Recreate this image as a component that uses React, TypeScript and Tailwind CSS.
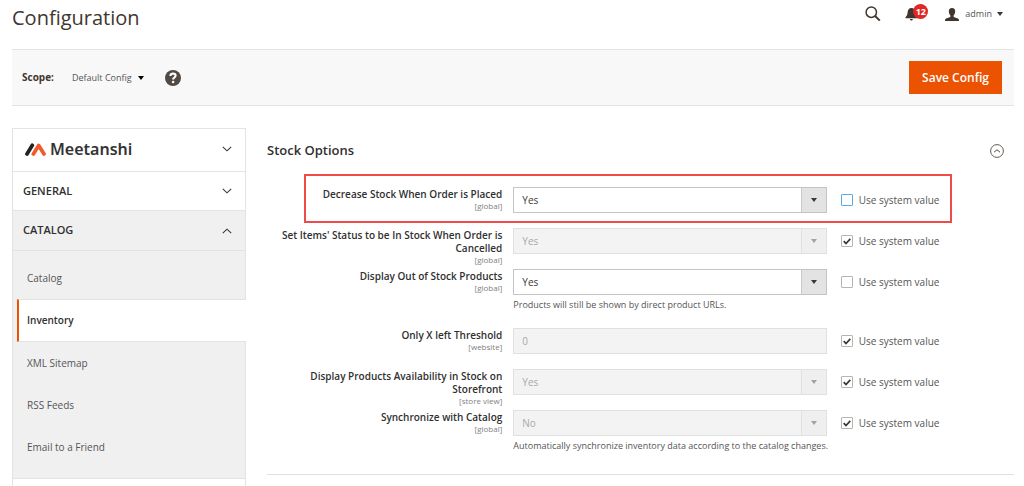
import { ReactNode } from "react";

const NAV = ["Catalog", "Inventory", "XML Sitemap", "RSS Feeds", "Email to a Friend"];

type Field = {
  id: string;
  label: string;
  scope: string;
  value: string;
  kind: "select" | "text";
  system: boolean;
  note?: string;
  highlighted?: boolean;
};

const FIELDS: Field[] = [
  { id: "decrease", label: "Decrease Stock When Order is Placed", scope: "[global]", value: "Yes", kind: "select", system: false, highlighted: true },
  { id: "cancelled", label: "Set Items' Status to be In Stock When Order is Cancelled", scope: "[global]", value: "Yes", kind: "select", system: true },
  { id: "outofstock", label: "Display Out of Stock Products", scope: "[global]", value: "Yes", kind: "select", system: false, note: "Products will still be shown by direct product URLs." },
  { id: "threshold", label: "Only X left Threshold", scope: "[website]", value: "0", kind: "text", system: true },
  { id: "availability", label: "Display Products Availability in Stock on Storefront", scope: "[store view]", value: "Yes", kind: "select", system: true },
  { id: "sync", label: "Synchronize with Catalog", scope: "[global]", value: "No", kind: "select", system: true, note: "Automatically synchronize inventory data according to the catalog changes." },
];

function Caret({ className = "" }: { className?: string }) {
  return (
    <svg viewBox="0 0 6 4" className={`h-1 w-1.5 ${className}`} aria-hidden="true">
      <path d="M0 0h6L3 4z" fill="currentColor" />
    </svg>
  );
}

function Chevron({ up = false }: { up?: boolean }) {
  return (
    <svg viewBox="0 0 10 6" className="h-1.5 w-2.5 text-[#41362f]" fill="none" stroke="currentColor" strokeWidth="1.1" aria-hidden="true">
      <path d={up ? "M.8 5.2 5 1.2l4.2 4" : "M.8.8 5 4.8l4.2-4"} />
    </svg>
  );
}

function Section({ children, open = false, tall = false }: { children: ReactNode; open?: boolean; tall?: boolean }) {
  return (
    <button
      type="button"
      aria-expanded={open}
      className={`flex w-full items-center justify-between border-b border-[#e3e3e3] pr-[13px] pl-[10px] text-left text-[11px] font-semibold text-[#303030] ${tall ? "h-[43px] pb-0.5" : open ? "h-10" : "h-[39px]"} ${open ? "bg-[#f0f0f0]" : "bg-white"}`}
    >
      {children}
      <Chevron up={open} />
    </button>
  );
}

function Row({ field }: { field: Field }) {
  const off = field.system;
  return (
    <div className={`relative grid grid-cols-[235fr_313fr_176fr] gap-x-[11px] ${field.note ? "min-h-[59px]" : "min-h-[41px]"}`}>
      <label htmlFor={field.id} className="block pt-px text-right text-[10px] leading-[13px] font-semibold text-[#303030]">
        {field.label}
        <span className="block text-[8px] leading-[10px] font-normal text-[#808080]">{field.scope}</span>
      </label>
      <div className="min-w-0">
        {field.kind === "select" ? (
          <div className="relative">
            <select
              id={field.id}
              disabled={off}
              defaultValue={field.value}
              className={`block h-[26px] w-full appearance-none border pr-8 pl-2 text-[10px] opacity-100 ${off ? "border-[#e0e0e0] bg-[#f3f3f3] text-[#a9a9a9]" : "border-[#c4c4c4] bg-white text-[#41362f]"}`}
            >
              <option>Yes</option>
              <option>No</option>
            </select>
            <span
              className={`pointer-events-none absolute inset-y-px right-px flex w-[25px] items-center justify-center border-l ${off ? "border-[#e0e0e0] bg-[#efefef] text-[#a6a19d]" : "border-[#c9c9c9] bg-[#e3e3e3] text-[#41362f]"}`}
            >
              <Caret />
            </span>
          </div>
        ) : (
          <input
            id={field.id}
            type="text"
            disabled={off}
            defaultValue={field.value}
            className="block h-[26px] w-full border border-[#e0e0e0] bg-[#f3f3f3] px-2 text-[10px] text-[#a9a9a9]"
          />
        )}
        {field.note && <p className="mt-[3px] text-[9px] leading-[14px] whitespace-nowrap text-[#555]">{field.note}</p>}
      </div>
      <label className="flex h-[26px] items-center gap-[6px] pl-[3px] text-[10px] text-[#555]">
        <span className="grid size-3 place-items-center">
          <input
            type="checkbox"
            defaultChecked={off}
            className={`peer col-start-1 row-start-1 size-3 appearance-none rounded-[1px] border bg-white ${field.highlighted ? "border-[#5aa9e6]" : "border-[#b5b5b5]"}`}
          />
          <svg viewBox="0 0 8 7" className="invisible z-10 col-start-1 row-start-1 h-[7px] w-2 peer-checked:visible" fill="none" stroke="#41362f" strokeWidth="1.7" aria-hidden="true">
            <path d="M.7 3.2 3 5.6 7.3.9" />
          </svg>
        </span>
        Use system value
      </label>
      {field.highlighted && (
        <div className="pointer-events-none absolute -top-[13px] right-[62px] bottom-[5px] left-[37px] border-2 border-[#f04b4b]" />
      )}
    </div>
  );
}

export default function App() {
  return (
    <div className="bg-white pr-[10px] pl-3 font-['Open_Sans',sans-serif] text-[#41362f]">
      <header className="flex h-[49px] justify-between">
        <h1 className="pt-[3px] text-[20px] leading-[30px]">Configuration</h1>
        <div className="flex h-7 items-center pr-[11px]">
          <button type="button" aria-label="Search">
            <svg viewBox="0 0 16 16" className="size-4" fill="none" stroke="#41362f" aria-hidden="true">
              <circle cx="6.3" cy="6.2" r="5.2" strokeWidth="1.5" />
              <path d="m10.100 10 4.700 4.600" strokeWidth="2" />
            </svg>
          </button>
          <button type="button" aria-label="Notifications" className="relative ml-6">
            <svg viewBox="0 0 14 14" className="size-3.5" fill="#41362f" aria-hidden="true">
              <path d="M6.500 1C3.900 1 2.800 3 2.600 5.500 2.400 8 1.800 9 .5 10.300v.9h11.700v-.9C10.900 9 10.400 8 10.200 5.500 10 3 8.900 1 6.500 1zM4.900 12h3c-.2 1-.8 1.500-1.500 1.500S5.100 13 4.900 12z" />
            </svg>
            <span className="absolute -top-[3px] left-2 flex size-[15px] items-center justify-center rounded-full bg-[#e22626] text-[9px] font-bold text-white">12</span>
          </button>
          <button type="button" className="ml-[26px] flex items-center text-[10px] text-[#41362f]">
            <svg viewBox="0 0 14 13" className="h-[13px] w-3.5" fill="#41362f" aria-hidden="true">
              <path d="M7 0c2.200 0 3.300 1.500 3.200 3.500-.1 1.700-.8 3.200-1.600 4v1.200c.6.700 2.500 1 3.900 1.600 1.200.5 1.500 1.200 1.500 2.700H0c0-1.500.3-2.200 1.500-2.700 1.400-.6 3.300-.9 3.900-1.600V7.500c-.8-.8-1.500-2.300-1.600-4C3.700 1.500 4.800 0 7 0z" />
            </svg>
            <span className="ml-[6px] text-[9px] text-[#555]">admin</span>
            <Caret className="ml-[5px]" />
          </button>
        </div>
      </header>

      <div className="flex h-[57px] items-center border-y border-[#e3e3e3] bg-[#f8f8f8] pr-3 pl-[10px]">
        <span className="text-[10px] font-bold">Scope:</span>
        <button type="button" className="ml-[18px] flex items-center text-[9px] text-[#555]">
          Default Config
          <Caret className="ml-[6px] text-black" />
        </button>
        <a href="#help" aria-label="Help" className="ml-[21px]">
          <svg viewBox="0 0 16 16" className="size-4" aria-hidden="true">
            <circle cx="8" cy="8" r="8" fill="#514943" />
            <path d="M5.400 5.900C5.400 4.300 6.500 3.600 8 3.600s2.600.8 2.600 2.200c0 1.700-2.500 1.700-2.500 3.700" fill="none" stroke="#fff" strokeWidth="2.100" />
            <circle cx="8.100" cy="12" r="1.300" fill="#fff" />
          </svg>
        </a>
        <button type="button" className="ml-auto h-[33px] bg-[#eb5202] px-[13px] text-[12px] font-semibold text-white">
          Save Config
        </button>
      </div>

      <div className="flex pt-[22px]">
        <nav className="w-[234px] shrink-0 border border-[#e3e3e3]">
          <Section tall>
            <span className="flex items-center gap-1 pl-[2px] font-['Noto_Sans',sans-serif] text-[16px] font-semibold text-[#333]">
              <svg viewBox="0 0 21 13" className="h-[13px] w-[21px]" fill="none" strokeWidth="3.700" strokeLinecap="round" strokeLinejoin="round" aria-hidden="true">
                <path d="M2 11 7.300 2.300" stroke="#222" />
                <path d="M8.400 11 13.700 2.500 19 11" stroke="#f4592b" />
              </svg>
              Meetanshi
            </span>
          </Section>
          <Section>GENERAL</Section>
          <Section open>CATALOG</Section>
          <ul className="border-b border-[#e3e3e3] bg-[#f0f0f0] pt-[6px] pb-[10px] text-[10px]">
            {NAV.map((item) => (
              <li key={item}>
                <a
                  href="#section"
                  aria-current={item === "Inventory" ? "page" : undefined}
                  className={
                    item === "Inventory"
                      ? "-mr-px ml-1 flex h-[43px] items-center border-y border-l-2 border-y-[#e3e3e3] border-l-[#eb5202] bg-white pl-2 font-semibold text-[#303030]"
                      : "flex h-[42px] items-center pl-[14px] text-[#555]"
                  }
                >
                  {item}
                </a>
              </li>
            ))}
          </ul>
          <div className="h-2" />
        </nav>

        <main className="ml-[21px] min-w-0 flex-1">
          <div className="flex h-[46px] items-center justify-between pr-[10px]">
            <h2 className="text-[13px] font-semibold text-[#303030]">Stock Options</h2>
            <button type="button" aria-label="Collapse Stock Options">
              <svg viewBox="0 0 14 14" className="size-3.5" fill="none" stroke="#514943" aria-hidden="true">
                <circle cx="7" cy="7" r="6.400" strokeWidth=".9" />
                <path d="M4 8.200 7 5.800l3 2.400" />
              </svg>
            </button>
          </div>
          <div className="border-b border-[#e0e0e0] pt-[13px] pb-[5px]">
            {FIELDS.map((field) => (
              <Row key={field.id} field={field} />
            ))}
          </div>
        </main>
      </div>
    </div>
  );
}
